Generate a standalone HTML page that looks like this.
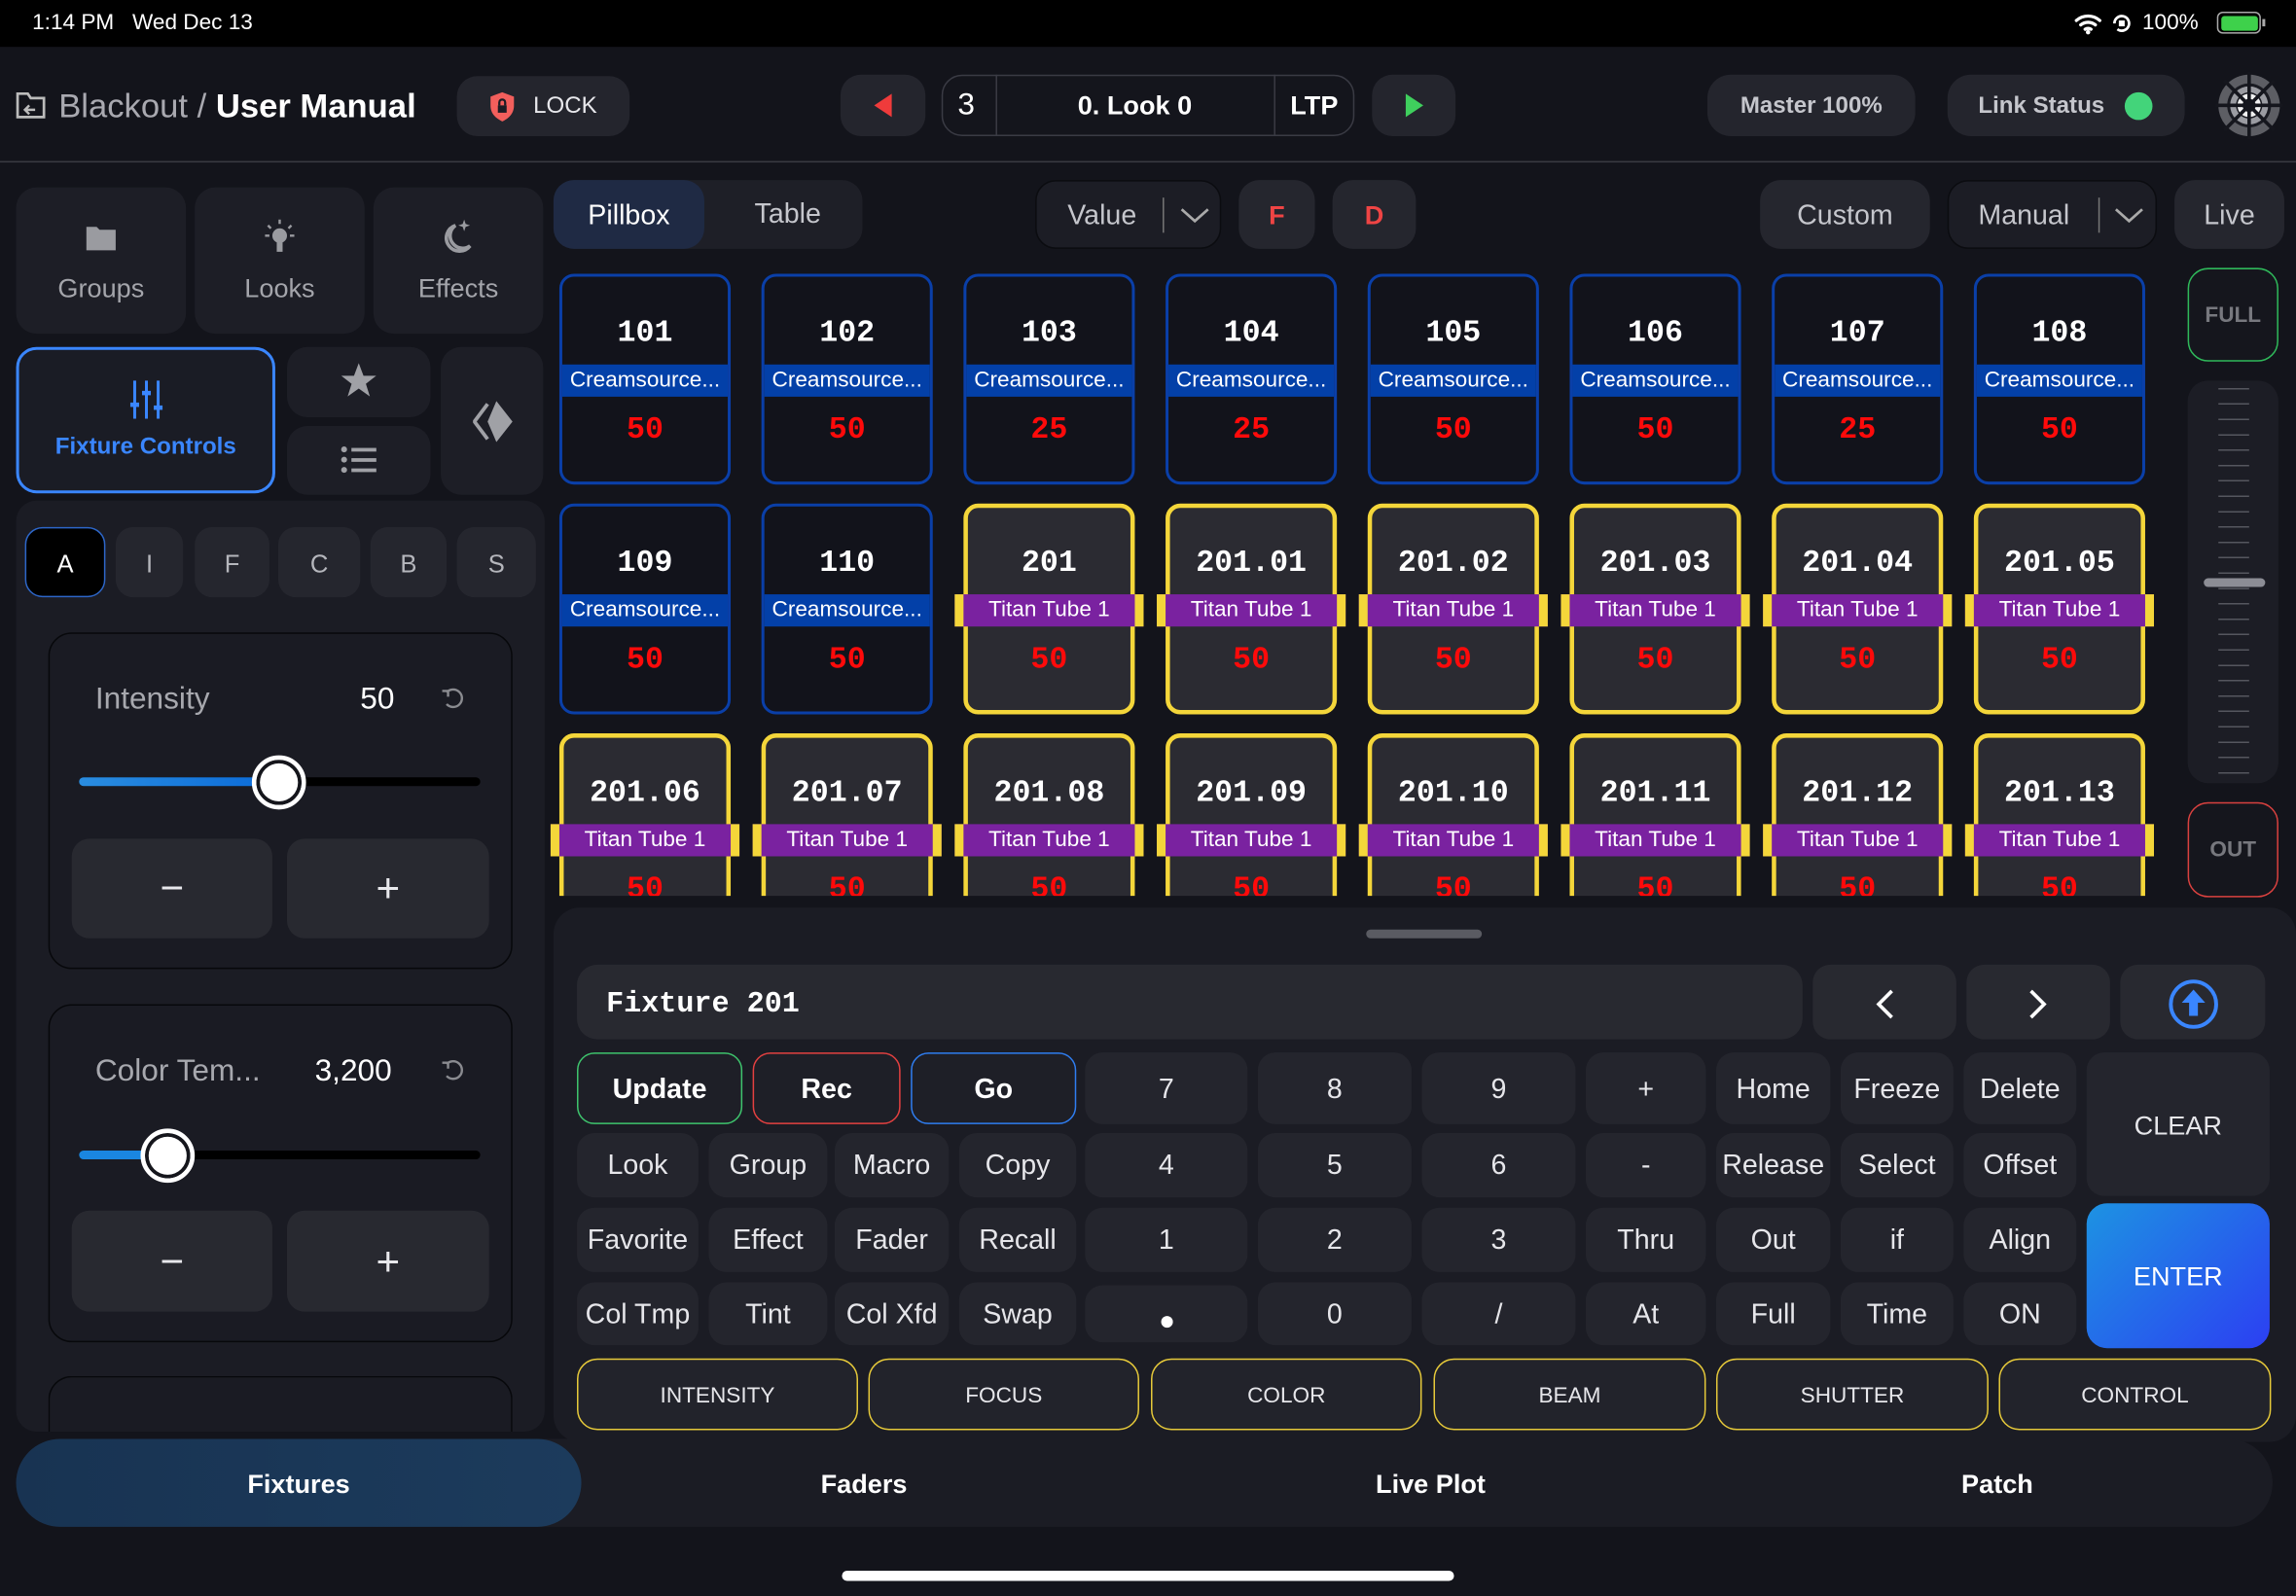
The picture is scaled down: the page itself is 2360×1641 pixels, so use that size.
<!DOCTYPE html>
<html><head><meta charset="utf-8"><style>
*{margin:0;padding:0;box-sizing:border-box}
html,body{width:2360px;height:1640px;overflow:hidden;background:#13141b}
#w{position:absolute;left:0;top:0;width:1568px;height:1090px;transform:scale(1.50510);transform-origin:0 0;background:#13141b;font-family:"Liberation Sans",sans-serif;color:#fff;overflow:hidden}
.a{position:absolute}
.b{position:absolute;display:flex;align-items:center;justify-content:center;background:#25262e;border-radius:12px;color:#e8e8ec;font-size:19px}
.t{position:absolute;background:#1d1e26;border-radius:14px}
.px{position:absolute;width:117px;height:144px;border-radius:10px}
.bl{border:2px solid #0a3fa8;background:#12131b}
.ye{border:3px solid #f4d63a;background:#2b2b32}
.n{position:absolute;left:0;right:0;top:28px;text-align:center;font:bold 21px "Liberation Mono",monospace;color:#fff}
.l{position:absolute;left:0;right:0;top:60px;height:22px;line-height:22px;background:#0340a8;text-align:center;font-size:15px;color:#fff;white-space:nowrap;overflow:hidden}
.ye .n{top:27px}.ye .l{top:59px;left:-9px;right:-9px;background:#7a22a0;border-left:6px solid #f4d63a;border-right:6px solid #f4d63a}
.v{position:absolute;left:0;right:0;top:94px;text-align:center;font:bold 21px "Liberation Mono",monospace;color:#ff0a0a}
.ye .v{top:93px}
.k{position:absolute;display:flex;align-items:center;justify-content:center;background:#24252d;border-radius:12px;color:#e6e6ea;font-size:19px;padding-top:2px}
.c{position:absolute;display:flex;align-items:center;justify-content:center;border:1.5px solid #e6c93a;border-radius:14px;background:#22232b;color:#e6e6ea;font-size:15px;top:928px;height:49px;padding-top:2px}
</style></head><body><div id="w">
<div class="a" style="left:0;top:0;width:1568px;height:32px;background:#000"></div>
<div class="a" style="left:22px;top:7px;font-size:15px">1:14 PM&nbsp;&nbsp;&nbsp;Wed Dec 13</div>
<svg class="a" style="left:1416px;top:8px" width="20" height="16" viewBox="0 0 20 16"><path d="M2 6a12 12 0 0 1 16 0M5 9a8 8 0 0 1 10 0M8 12a4 4 0 0 1 4 0" stroke="#fff" stroke-width="2.2" fill="none" stroke-linecap="round"/><circle cx="10" cy="14" r="1.5" fill="#fff"/></svg>
<svg class="a" style="left:1441px;top:8px" width="16" height="16" viewBox="0 0 16 16"><path d="M3 8a5 5 0 1 1 2 4" stroke="#fff" stroke-width="1.8" fill="none"/><rect x="6" y="6" width="4" height="4" fill="#fff"/></svg>
<div class="a" style="left:1463px;top:7px;font-size:15px">100%</div>
<div class="a" style="left:1514px;top:8px;width:30px;height:15px;border:1.5px solid #aaa;border-radius:4px;padding:1.5px"><div style="width:100%;height:100%;background:#3ed14b;border-radius:2px"></div></div>
<div class="a" style="left:1545px;top:13px;width:2px;height:5px;background:#aaa"></div>
<svg class="a" style="left:10px;top:62px" width="22" height="20" viewBox="0 0 22 20"><path d="M2 2h7l2 3h9v13H2z" stroke="#bbb" stroke-width="1.8" fill="none"/><path d="M14 13h-6m2-3-3 3 3 3" stroke="#bbb" stroke-width="1.6" fill="none"/></svg>
<div class="a" style="left:40px;top:59px;font-size:23px;color:#a9a9b0">Blackout / <b style="color:#fff">User Manual</b></div>
<div class="b" style="left:312px;top:52px;width:118px;height:41px;border-radius:14px;font-size:16px;background:#24252d"><svg width="18" height="22" viewBox="0 0 18 22" style="margin-right:12px"><path d="M9 1l8 3v6c0 6-4 9-8 11-4-2-8-5-8-11V4z" fill="#f25f5c"/><rect x="6" y="10" width="6" height="5" fill="#1c1c24"/><path d="M7 10V8a2 2 0 0 1 4 0v2" stroke="#1c1c24" stroke-width="1.5" fill="none"/></svg>LOCK</div>
<div class="b" style="left:574px;top:51px;width:58px;height:42px;border-radius:14px;background:#24252d"><svg width="16" height="18"><path d="M14 1 2 9l12 8z" fill="#ef3b3b"/></svg></div>
<div class="a" style="left:643px;top:51px;width:282px;height:42px;border:1px solid #3a3b44;border-radius:14px;background:#14151c"></div>
<div class="a" style="left:680px;top:51px;width:1px;height:42px;background:#3a3b44"></div>
<div class="a" style="left:870px;top:51px;width:1px;height:42px;background:#3a3b44"></div>
<div class="a" style="left:654px;top:60px;font-size:21px">3</div>
<div class="a" style="left:680px;top:62px;width:190px;text-align:center;font-size:18px;font-weight:bold">0. Look 0</div>
<div class="a" style="left:870px;top:62px;width:55px;text-align:center;font-size:18px;font-weight:bold">LTP</div>
<div class="b" style="left:937px;top:51px;width:57px;height:42px;border-radius:14px;background:#24252d"><svg width="16" height="18"><path d="M2 1l12 8-12 8z" fill="#3fcf5d"/></svg></div>
<div class="b" style="left:1166px;top:51px;width:142px;height:42px;border-radius:16px;font-size:16px;font-weight:bold;color:#c5c6cc;background:#24252d;padding-top:2px">Master 100%</div>
<div class="b" style="left:1330px;top:51px;width:162px;height:42px;border-radius:16px;font-size:16px;font-weight:bold;color:#c5c6cc;background:#24252d;justify-content:flex-start;padding-left:21px;padding-top:2px">Link Status<span style="position:absolute;left:121px;top:12px;width:19px;height:19px;border-radius:50%;background:#43d47a"></span></div>
<svg class="a" style="left:1513px;top:49px" width="46" height="46" viewBox="-23 -23 46 46"><circle r="21" fill="#5d5e64"/><circle r="15" fill="#1a1b22"/><circle r="13" fill="#9b9ca2"/><circle r="9" fill="#1a1b22"/><circle r="8" fill="#f2f2f2"/><circle r="4.5" fill="#15161d"/><g stroke="#15161d" stroke-width="2.4"><path d="M0-23V23M-23 0H23M-17-17 17 17M17-17-17 17"/></g></svg>
<div class="a" style="left:0;top:110px;width:1568px;height:1px;background:#3a3b42"></div>
<div class="t" style="left:11px;top:128px;width:116px;height:100px"></div>
<div class="t" style="left:133px;top:128px;width:116px;height:100px"></div>
<div class="t" style="left:255px;top:128px;width:116px;height:100px"></div>
<svg class="a" style="left:58px;top:152px" width="22" height="20"><path d="M1 3h7l2 2h11v14H1z" fill="#9a9ba0"/></svg>
<svg class="a" style="left:180px;top:149px" width="22" height="26" viewBox="0 0 22 26"><circle cx="11" cy="12" r="5" fill="#9a9ba0"/><rect x="9" y="16" width="4" height="7" fill="#9a9ba0"/><g stroke="#9a9ba0" stroke-width="1.6"><path d="M11 1v3M3 5l2 2M19 5l-2 2M1 12h3M18 12h3"/></g></svg>
<svg class="a" style="left:301px;top:148px" width="24" height="28" viewBox="0 0 24 28"><path d="M10 6a9 9 0 1 0 10 14A8 8 0 0 1 10 6z" fill="none" stroke="#9a9ba0" stroke-width="2.4"/><path d="M16 2l1 3 3 1-3 1-1 3-1-3-3-1 3-1z" fill="#9a9ba0"/></svg>
<div class="a" style="left:11px;top:187px;width:116px;text-align:center;font-size:18px;color:#a4a5ab">Groups</div>
<div class="a" style="left:133px;top:187px;width:116px;text-align:center;font-size:18px;color:#a4a5ab">Looks</div>
<div class="a" style="left:255px;top:187px;width:116px;text-align:center;font-size:18px;color:#a4a5ab">Effects</div>
<div class="a" style="left:11px;top:237px;width:177px;height:100px;border:2.5px solid #3a86ff;border-radius:14px;background:#1a1c25"></div>
<svg class="a" style="left:88px;top:259px" width="24" height="28" viewBox="0 0 24 28"><g stroke="#3a86ff" stroke-width="2"><path d="M4 1v26M12 1v26M20 1v26"/></g><g fill="#3a86ff"><rect x="1" y="16" width="6" height="3"/><rect x="9" y="8" width="6" height="3"/><rect x="17" y="18" width="6" height="3"/></g></svg>
<div class="a" style="left:11px;top:297px;width:177px;text-align:center;font-size:16px;font-weight:bold;color:#3a86ff">Fixture Controls</div>
<div class="t" style="left:196px;top:237px;width:98px;height:48px"></div>
<div class="t" style="left:196px;top:291px;width:98px;height:47px"></div>
<div class="t" style="left:301px;top:237px;width:70px;height:101px"></div>
<svg class="a" style="left:232px;top:247px" width="26" height="26" viewBox="0 0 24 24"><path d="M12 1l3 8h8l-6.5 5 2.5 8-7-5-7 5 2.5-8L1 9h8z" fill="#a0a1a6"/></svg>
<svg class="a" style="left:232px;top:304px" width="26" height="20"><g fill="#a0a1a6"><circle cx="3" cy="3" r="2"/><circle cx="3" cy="10" r="2"/><circle cx="3" cy="17" r="2"/><rect x="8" y="2" width="17" height="2.5"/><rect x="8" y="9" width="17" height="2.5"/><rect x="8" y="16" width="17" height="2.5"/></g></svg>
<svg class="a" style="left:323px;top:273px" width="28" height="30" viewBox="0 0 28 30"><path d="M16 1l11 14-11 14-6-14z" fill="#a0a1a6"/><path d="M10 3 1 15l9 12" stroke="#a0a1a6" stroke-width="2.5" fill="none"/></svg>
<div class="a" style="left:11px;top:342px;width:361px;height:636px;background:#1b1c24;border-radius:14px"></div>
<div class="b" style="left:17px;top:360px;width:55px;height:48px;background:#000;border:1px solid #2d66c8;font-size:17px;color:#fff;padding-top:3px">A</div>
<div class="b" style="left:79px;top:360px;width:46px;height:48px;font-size:17px;color:#b5b6bc;padding-top:3px">I</div>
<div class="b" style="left:133px;top:360px;width:51px;height:48px;font-size:17px;color:#b5b6bc;padding-top:3px">F</div>
<div class="b" style="left:190px;top:360px;width:56px;height:48px;font-size:17px;color:#b5b6bc;padding-top:3px">C</div>
<div class="b" style="left:253px;top:360px;width:52px;height:48px;font-size:17px;color:#b5b6bc;padding-top:3px">B</div>
<div class="b" style="left:312px;top:360px;width:54px;height:48px;font-size:17px;color:#b5b6bc;padding-top:3px">S</div>
<div class="a" style="left:33px;top:432px;width:317px;height:230px;border:1px solid #07080b;border-radius:16px;background:#1a1b23"></div>
<div class="a" style="left:65px;top:466px;font-size:21px;color:#a7a8ae">Intensity</div>
<div class="a" style="left:246px;top:466px;font-size:21px">50</div>
<svg class="a" style="left:300px;top:468px" width="20" height="18" viewBox="0 0 20 18"><path d="M5 5a6 6 0 1 1 0 8" stroke="#8a8b90" stroke-width="1.6" fill="none"/><path d="M2 4h4v4" stroke="#8a8b90" stroke-width="1.6" fill="none"/></svg>
<div class="a" style="left:54px;top:531px;width:274px;height:6px;border-radius:3px;background:#000"></div>
<div class="a" style="left:54px;top:531px;width:136px;height:6px;border-radius:3px;background:linear-gradient(90deg,#2a8de0,#0a6ad8)"></div>
<div class="a" style="left:172px;top:516px;width:37px;height:37px;border-radius:50%;background:#fff;border:3px solid #fff;box-shadow:inset 0 0 0 2.5px #15161c"></div>
<div class="b" style="left:49px;top:573px;width:137px;height:68px;font-size:28px;background:#282930">−</div>
<div class="b" style="left:196px;top:573px;width:138px;height:68px;font-size:28px;background:#282930">+</div>
<div class="a" style="left:33px;top:686px;width:317px;height:231px;border:1px solid #07080b;border-radius:16px;background:#1a1b23"></div>
<div class="a" style="left:65px;top:720px;font-size:21px;color:#a7a8ae">Color Tem...</div>
<div class="a" style="left:215px;top:720px;font-size:21px">3,200</div>
<svg class="a" style="left:300px;top:722px" width="20" height="18" viewBox="0 0 20 18"><path d="M5 5a6 6 0 1 1 0 8" stroke="#8a8b90" stroke-width="1.6" fill="none"/><path d="M2 4h4v4" stroke="#8a8b90" stroke-width="1.6" fill="none"/></svg>
<div class="a" style="left:54px;top:786px;width:274px;height:6px;border-radius:3px;background:#000"></div>
<div class="a" style="left:54px;top:786px;width:60px;height:6px;border-radius:3px;background:#1a86e0"></div>
<div class="a" style="left:96px;top:771px;width:37px;height:37px;border-radius:50%;background:#fff;border:3px solid #fff;box-shadow:inset 0 0 0 2.5px #15161c"></div>
<div class="b" style="left:49px;top:827px;width:137px;height:69px;font-size:28px;background:#282930">−</div>
<div class="b" style="left:196px;top:827px;width:138px;height:69px;font-size:28px;background:#282930">+</div>
<div class="a" style="left:33px;top:940px;width:317px;height:38px;border:1px solid #07080b;border-bottom:none;border-radius:16px 16px 0 0;background:#1a1b23"></div>
<div class="a" style="left:378px;top:123px;width:211px;height:47px;border-radius:14px;background:#1e1f27"></div>
<div class="b" style="left:378px;top:123px;width:103px;height:47px;border-radius:14px;background:#1f2a44;font-size:19px;color:#fff;padding-top:2px">Pillbox</div>
<div class="a" style="left:484px;top:136px;width:108px;text-align:center;font-size:19px;color:#c5c6cc">Table</div>
<div class="b" style="left:707px;top:123px;width:127px;height:47px;border-radius:14px;background:#1c1d25;border:1px solid #0b0c10;font-size:19px;color:#c5c6cc;justify-content:flex-start;padding-left:21px;padding-top:2px">Value<span style="position:absolute;left:86px;top:11px;width:1px;height:24px;background:#777"></span><svg style="position:absolute;left:98px;top:17px" width="20" height="12"><path d="M1 2l9 8 9-8" stroke="#aaa" stroke-width="1.8" fill="none"/></svg></div>
<div class="b" style="left:846px;top:123px;width:52px;height:47px;border-radius:14px;color:#ef4444;font-weight:bold;font-size:18px;padding-top:2px">F</div>
<div class="b" style="left:910px;top:123px;width:57px;height:47px;border-radius:14px;color:#ef4444;font-weight:bold;font-size:18px;padding-top:2px">D</div>
<div class="b" style="left:1202px;top:123px;width:116px;height:47px;border-radius:14px;color:#c5c6cc;padding-top:2px">Custom</div>
<div class="b" style="left:1330px;top:123px;width:143px;height:47px;border-radius:14px;background:#1c1d25;border:1px solid #0b0c10;color:#c5c6cc;justify-content:flex-start;padding-left:20px;padding-top:2px">Manual<span style="position:absolute;left:102px;top:11px;width:1px;height:24px;background:#777"></span><svg style="position:absolute;left:113px;top:17px" width="20" height="12"><path d="M1 2l9 8 9-8" stroke="#aaa" stroke-width="1.8" fill="none"/></svg></div>
<div class="b" style="left:1485px;top:123px;width:75px;height:47px;border-radius:14px;color:#c5c6cc;padding-top:2px">Live</div>
<div class="b" style="left:1494px;top:183px;width:62px;height:64px;border:1.5px solid #2fb85a;border-radius:14px;background:#15161d;font-size:15px;font-weight:bold;color:#77787e">FULL</div>
<div class="a" style="left:1494px;top:260px;width:62px;height:275px;border-radius:14px;background:#1c1d25"></div>
<div class="a" style="left:1515px;top:265px;width:21px;height:265px;background:repeating-linear-gradient(180deg,#55565e 0 1px,transparent 1px 10.5px)"></div>
<div class="a" style="left:1505px;top:395px;width:42px;height:6px;border-radius:3px;background:#8c8d95"></div>
<div class="b" style="left:1494px;top:548px;width:62px;height:65px;border:1.5px solid #d9413f;border-radius:14px;background:#15161d;font-size:15px;font-weight:bold;color:#77787e">OUT</div>
<div class="a" style="left:0;top:180px;width:1480px;height:432px;overflow:hidden">
<div class="a" style="left:0;top:-180px;width:1480px;height:800px">
<div class="px bl" style="left:382px;top:187px"><div class="n">101</div><div class="l">Creamsource...</div><div class="v">50</div></div>
<div class="px bl" style="left:520px;top:187px"><div class="n">102</div><div class="l">Creamsource...</div><div class="v">50</div></div>
<div class="px bl" style="left:658px;top:187px"><div class="n">103</div><div class="l">Creamsource...</div><div class="v">25</div></div>
<div class="px bl" style="left:796px;top:187px"><div class="n">104</div><div class="l">Creamsource...</div><div class="v">25</div></div>
<div class="px bl" style="left:934px;top:187px"><div class="n">105</div><div class="l">Creamsource...</div><div class="v">50</div></div>
<div class="px bl" style="left:1072px;top:187px"><div class="n">106</div><div class="l">Creamsource...</div><div class="v">50</div></div>
<div class="px bl" style="left:1210px;top:187px"><div class="n">107</div><div class="l">Creamsource...</div><div class="v">25</div></div>
<div class="px bl" style="left:1348px;top:187px"><div class="n">108</div><div class="l">Creamsource...</div><div class="v">50</div></div>
<div class="px bl" style="left:382px;top:344px"><div class="n">109</div><div class="l">Creamsource...</div><div class="v">50</div></div>
<div class="px bl" style="left:520px;top:344px"><div class="n">110</div><div class="l">Creamsource...</div><div class="v">50</div></div>
<div class="px ye" style="left:658px;top:344px"><div class="n">201</div><div class="l">Titan Tube 1</div><div class="v">50</div></div>
<div class="px ye" style="left:796px;top:344px"><div class="n">201.01</div><div class="l">Titan Tube 1</div><div class="v">50</div></div>
<div class="px ye" style="left:934px;top:344px"><div class="n">201.02</div><div class="l">Titan Tube 1</div><div class="v">50</div></div>
<div class="px ye" style="left:1072px;top:344px"><div class="n">201.03</div><div class="l">Titan Tube 1</div><div class="v">50</div></div>
<div class="px ye" style="left:1210px;top:344px"><div class="n">201.04</div><div class="l">Titan Tube 1</div><div class="v">50</div></div>
<div class="px ye" style="left:1348px;top:344px"><div class="n">201.05</div><div class="l">Titan Tube 1</div><div class="v">50</div></div>
<div class="px ye" style="left:382px;top:501px"><div class="n">201.06</div><div class="l">Titan Tube 1</div><div class="v">50</div></div>
<div class="px ye" style="left:520px;top:501px"><div class="n">201.07</div><div class="l">Titan Tube 1</div><div class="v">50</div></div>
<div class="px ye" style="left:658px;top:501px"><div class="n">201.08</div><div class="l">Titan Tube 1</div><div class="v">50</div></div>
<div class="px ye" style="left:796px;top:501px"><div class="n">201.09</div><div class="l">Titan Tube 1</div><div class="v">50</div></div>
<div class="px ye" style="left:934px;top:501px"><div class="n">201.10</div><div class="l">Titan Tube 1</div><div class="v">50</div></div>
<div class="px ye" style="left:1072px;top:501px"><div class="n">201.11</div><div class="l">Titan Tube 1</div><div class="v">50</div></div>
<div class="px ye" style="left:1210px;top:501px"><div class="n">201.12</div><div class="l">Titan Tube 1</div><div class="v">50</div></div>
<div class="px ye" style="left:1348px;top:501px"><div class="n">201.13</div><div class="l">Titan Tube 1</div><div class="v">50</div></div>
</div></div>
<div class="a" style="left:378px;top:620px;width:1190px;height:365px;border-radius:18px;background:#1b1c24"></div>
<div class="a" style="left:933px;top:635px;width:79px;height:6px;border-radius:3px;background:#5a5b62"></div>
<div class="a" style="left:394px;top:659px;width:837px;height:51px;border-radius:14px;background:#282930"></div>
<div class="a" style="left:414px;top:675px;font:bold 20px 'Liberation Mono',monospace;color:#fff">Fixture 201</div>
<div class="k" style="left:1238px;top:659px;width:98px;height:51px;background:#282930"><svg width="14" height="22"><path d="M12 2 3 11l9 9" stroke="#fff" stroke-width="2.4" fill="none"/></svg></div>
<div class="k" style="left:1343px;top:659px;width:98px;height:51px;background:#282930"><svg width="14" height="22"><path d="M2 2l9 9-9 9" stroke="#fff" stroke-width="2.4" fill="none"/></svg></div>
<div class="k" style="left:1448px;top:659px;width:99px;height:51px;background:#282930"><svg width="36" height="36" viewBox="0 0 36 36"><circle cx="18" cy="18" r="15.5" stroke="#3a86ff" stroke-width="2.6" fill="none"/><path d="M18 8l-8 9h5v9h6v-9h5z" fill="#3a86ff"/></svg></div>
<div class="k" style="left:394px;top:719px;width:113px;height:49px;border:1.5px solid #3ec46d;background:#1e1f27;font-weight:bold;color:#fff">Update</div>
<div class="k" style="left:514px;top:719px;width:101px;height:49px;border:1.5px solid #e34040;background:#1e1f27;font-weight:bold;color:#fff">Rec</div>
<div class="k" style="left:622px;top:719px;width:113px;height:49px;border:1.5px solid #2f7df0;background:#1e1f27;font-weight:bold;color:#fff">Go</div>
<div class="k" style="left:741px;top:719px;width:111px;height:49px">7</div>
<div class="k" style="left:859px;top:719px;width:105px;height:49px">8</div>
<div class="k" style="left:971px;top:719px;width:105px;height:49px">9</div>
<div class="k" style="left:1083px;top:719px;width:82px;height:49px">+</div>
<div class="k" style="left:1172px;top:719px;width:78px;height:49px">Home</div>
<div class="k" style="left:1257px;top:719px;width:77px;height:49px">Freeze</div>
<div class="k" style="left:1341px;top:719px;width:77px;height:49px">Delete</div>
<div class="k" style="left:1425px;top:719px;width:125px;height:98px;font-size:18px">CLEAR</div>
<div class="k" style="left:394px;top:774px;width:83px;height:44px">Look</div>
<div class="k" style="left:484px;top:774px;width:81px;height:44px">Group</div>
<div class="k" style="left:570px;top:774px;width:78px;height:44px">Macro</div>
<div class="k" style="left:655px;top:774px;width:80px;height:44px">Copy</div>
<div class="k" style="left:741px;top:774px;width:111px;height:44px">4</div>
<div class="k" style="left:859px;top:774px;width:105px;height:44px">5</div>
<div class="k" style="left:971px;top:774px;width:105px;height:44px">6</div>
<div class="k" style="left:1083px;top:774px;width:82px;height:44px">-</div>
<div class="k" style="left:1172px;top:774px;width:78px;height:44px">Release</div>
<div class="k" style="left:1257px;top:774px;width:77px;height:44px">Select</div>
<div class="k" style="left:1341px;top:774px;width:77px;height:44px">Offset</div>
<div class="k" style="left:394px;top:825px;width:83px;height:44px">Favorite</div>
<div class="k" style="left:484px;top:825px;width:81px;height:44px">Effect</div>
<div class="k" style="left:570px;top:825px;width:78px;height:44px">Fader</div>
<div class="k" style="left:655px;top:825px;width:80px;height:44px">Recall</div>
<div class="k" style="left:741px;top:825px;width:111px;height:44px">1</div>
<div class="k" style="left:859px;top:825px;width:105px;height:44px">2</div>
<div class="k" style="left:971px;top:825px;width:105px;height:44px">3</div>
<div class="k" style="left:1083px;top:825px;width:82px;height:44px">Thru</div>
<div class="k" style="left:1172px;top:825px;width:78px;height:44px">Out</div>
<div class="k" style="left:1257px;top:825px;width:77px;height:44px">if</div>
<div class="k" style="left:1341px;top:825px;width:77px;height:44px">Align</div>
<div class="k" style="left:1425px;top:822px;width:125px;height:99px;font-size:18px;color:#fff;background:linear-gradient(135deg,#1d93e2,#2c3ff2);border-radius:14px">ENTER</div>
<div class="k" style="left:394px;top:876px;width:83px;height:43px">Col Tmp</div>
<div class="k" style="left:484px;top:876px;width:81px;height:43px">Tint</div>
<div class="k" style="left:570px;top:876px;width:78px;height:43px">Col Xfd</div>
<div class="k" style="left:655px;top:876px;width:80px;height:43px">Swap</div>
<div class="k" style="left:741px;top:878px;width:111px;height:39px"><span style="width:8px;height:8px;border-radius:50%;background:#fff;margin-top:8px"></span></div>
<div class="k" style="left:859px;top:876px;width:105px;height:43px">0</div>
<div class="k" style="left:971px;top:876px;width:105px;height:43px">/</div>
<div class="k" style="left:1083px;top:876px;width:82px;height:43px">At</div>
<div class="k" style="left:1172px;top:876px;width:78px;height:43px">Full</div>
<div class="k" style="left:1257px;top:876px;width:77px;height:43px">Time</div>
<div class="k" style="left:1341px;top:876px;width:77px;height:43px">ON</div>
<div class="c" style="left:394px;width:192px">INTENSITY</div>
<div class="c" style="left:593px;width:185px">FOCUS</div>
<div class="c" style="left:786px;width:185px">COLOR</div>
<div class="c" style="left:979px;width:186px">BEAM</div>
<div class="c" style="left:1172px;width:186px">SHUTTER</div>
<div class="c" style="left:1365px;width:186px">CONTROL</div>
<div class="a" style="left:11px;top:983px;width:1541px;height:60px;border-radius:30px;background:#1b1c24"></div>
<div class="a" style="left:11px;top:983px;width:386px;height:60px;border-radius:30px;background:linear-gradient(90deg,#183352,#1c3b5c)"></div>
<div class="a" style="left:11px;top:1004px;width:386px;text-align:center;font-size:18px;font-weight:bold">Fixtures</div>
<div class="a" style="left:490px;top:1004px;width:200px;text-align:center;font-size:18px;font-weight:bold">Faders</div>
<div class="a" style="left:877px;top:1004px;width:200px;text-align:center;font-size:18px;font-weight:bold">Live Plot</div>
<div class="a" style="left:1264px;top:1004px;width:200px;text-align:center;font-size:18px;font-weight:bold">Patch</div>
<div class="a" style="left:575px;top:1073px;width:418px;height:7px;border-radius:4px;background:#fff"></div>
</div></body></html>
